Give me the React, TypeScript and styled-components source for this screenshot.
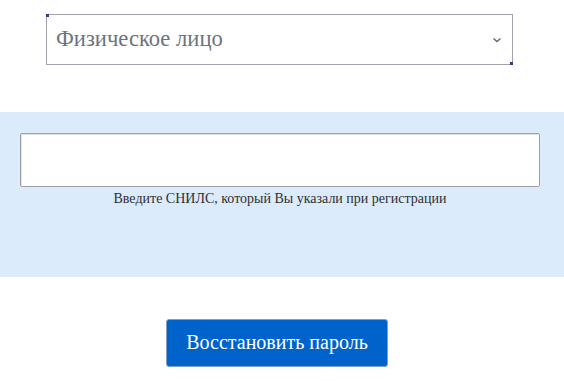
import styled, { createGlobalStyle } from 'styled-components';

const serif = `"Liberation Serif", "Times New Roman", "DejaVu Serif", serif`;

const Global = createGlobalStyle`
  html, body {
    margin: 0;
    padding: 0;
    background: #ffffff;
  }
  body {
    font-family: ${serif};
  }
`;

const Page = styled.div`
  display: flex;
  flex-direction: column;
  width: 564px;
  font-family: ${serif};
`;

const SelectRow = styled.div`
  padding: 14px 0 0 46px;
`;

const SelectBox = styled.div`
  position: relative;
  box-sizing: border-box;
  width: 467px;
  height: 51px;
  border: 1px solid #a3a3ad;
  display: flex;
  align-items: center;
  justify-content: space-between;
  padding: 0 8px 0 9px;
  background: #ffffff;
  &::before, &::after {
    content: '';
    position: absolute;
    width: 3px;
    height: 3px;
    background: #3a3a7a;
  }
  &::before { left: -1px; top: -1px; }
  &::after { right: -1px; bottom: -1px; }
`;

const SelectText = styled.span`
  font-family: ${serif};
  font-size: 22.6px;
  color: #6c7480;
  line-height: 1;
`;

const Chevron = styled.svg`
  width: 10px;
  height: 10px;
  margin-right: 2px;
`;

const Panel = styled.section`
  margin-top: 47px;
  height: 165px;
  box-sizing: border-box;
  background: #dcebfc;
  padding: 21px 24px 0 20px;
  display: flex;
  flex-direction: column;
`;

const Field = styled.input`
  box-sizing: border-box;
  width: 520px;
  height: 54px;
  border: 1px solid #a0a0a0;
  border-radius: 2px;
  background: #ffffff;
  outline: none;
  box-shadow: inset 1px 1px 0 #e2e2e2;
`;

const Hint = styled.div`
  margin: 3px 0 0;
  width: 520px;
  text-align: center;
  font-family: ${serif};
  font-size: 14px;
  line-height: 17px;
  color: #2f2f2f;
`;

const ButtonRow = styled.div`
  padding: 42px 0 0 166px;
`;

const SubmitButton = styled.button`
  box-sizing: border-box;
  width: 222px;
  height: 48px;
  border: 1px solid #7f9fc4;
  border-radius: 3px;
  background: #0063cc;
  color: #ffffff;
  font-family: ${serif};
  font-size: 20px;
  padding: 0 0 2px;
  cursor: pointer;
`;

export default function App() {
  return (
    <Page>
      <Global />
      <SelectRow>
        <SelectBox>
          <SelectText>Физическое лицо</SelectText>
          <Chevron viewBox="0 0 10 10">
            <path d="M1.5 3.5 L5 6.5 L8.5 3.5" fill="none" stroke="#6b6b78" strokeWidth="1.6" />
          </Chevron>
        </SelectBox>
      </SelectRow>
      <Panel>
        <Field type="text" />
        <Hint>Введите СНИЛС, который Вы указали при регистрации</Hint>
      </Panel>
      <ButtonRow>
        <SubmitButton type="button">Восстановить пароль</SubmitButton>
      </ButtonRow>
    </Page>
  );
}
